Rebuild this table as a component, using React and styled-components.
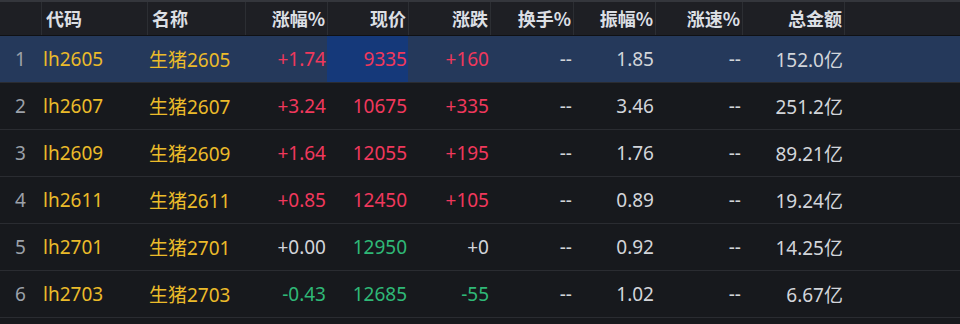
import React from 'react'
import styled, { createGlobalStyle } from 'styled-components'

const GlobalStyle = createGlobalStyle`
  html, body {
    margin: 0;
    padding: 0;
    background: #17191d;
  }
  body {
    font-family: "Noto Sans", "Noto Sans CJK SC", sans-serif;
  }
`

const COLS = '41px 106px 98px 82px 81px 82px 83px 82px 87px 102px 1fr'

const Table = styled.div`
  width: 960px;
  height: 324px;
  overflow: hidden;
  background: #17191d;
`

const HeaderRow = styled.div`
  display: grid;
  grid-template-columns: ${COLS};
  height: 36px;
  border-top: 2px solid #34363c;
  border-bottom: 1px solid #101114;
  background: #1e1f24;
  box-sizing: border-box;
`

const HeadCell = styled.div`
  display: flex;
  align-items: center;
  justify-content: ${p => (p.$left ? 'flex-start' : 'flex-end')};
  padding: ${p => (p.$left ? '0 0 2px 4px' : '0 2px 2px 0')};
  border-left: ${p => (p.$first ? 'none' : '1px solid #2c2e33')};
  font-family: "Noto Sans CJK SC", sans-serif;
  font-weight: 700;
  font-size: 18px;
  color: #dcdfe4;
  box-sizing: border-box;
`

const Row = styled.div`
  display: grid;
  grid-template-columns: ${COLS};
  height: 47px;
  box-sizing: border-box;
  border-bottom: 1px solid #2a2c31;
  background: ${p => (p.$active ? '#25395b' : '#17191d')};
`

const Cell = styled.div`
  display: flex;
  align-items: center;
  justify-content: ${p => (p.$align === 'left' ? 'flex-start' : p.$align === 'center' ? 'center' : 'flex-end')};
  padding: ${p => (p.$align === 'left' ? '0 0 0 2px' : p.$align === 'center' ? '0' : '0 1px 0 0')};
  font-size: 19px;
  color: ${p => p.$color || '#d2d5da'};
  background: ${p => (p.$mark ? '#15397a' : 'transparent')};
  white-space: nowrap;
  box-sizing: border-box;
`

const RED = '#f0385c'
const GREEN = '#2fb877'
const WHITE = '#d2d5da'
const YELLOW = '#ebbb2a'
const GREY = '#9ca1a9'

const rows = [
  { code: 'lh2605', name: '生猪2605', pct: '+1.74', price: '9335', chg: '+160', amp: '1.85', amt: '152.0亿', dir: 1 },
  { code: 'lh2607', name: '生猪2607', pct: '+3.24', price: '10675', chg: '+335', amp: '3.46', amt: '251.2亿', dir: 1 },
  { code: 'lh2609', name: '生猪2609', pct: '+1.64', price: '12055', chg: '+195', amp: '1.76', amt: '89.21亿', dir: 1 },
  { code: 'lh2611', name: '生猪2611', pct: '+0.85', price: '12450', chg: '+105', amp: '0.89', amt: '19.24亿', dir: 1 },
  { code: 'lh2701', name: '生猪2701', pct: '+0.00', price: '12950', chg: '+0', amp: '0.92', amt: '14.25亿', dir: 0 },
  { code: 'lh2703', name: '生猪2703', pct: '-0.43', price: '12685', chg: '-55', amp: '1.02', amt: '6.67亿', dir: -1 },
]

const headers = ['代码', '名称', '涨幅%', '现价', '涨跌', '换手%', '振幅%', '涨速%', '总金额']

const dirColor = d => (d > 0 ? RED : d < 0 ? GREEN : WHITE)

export default function App () {
  return (
    <Table>
      <GlobalStyle />
      <HeaderRow>
        <HeadCell $first />
        {headers.map((h, i) => (
          <HeadCell key={h} $left={i < 2}>{h}</HeadCell>
        ))}
        <HeadCell />
      </HeaderRow>
      {rows.map((r, i) => (
        <Row key={r.code} $active={i === 0}>
          <Cell $align="center" $color={GREY}>{i + 1}</Cell>
          <Cell $align="left" $color={YELLOW}>{r.code}</Cell>
          <Cell $align="left" $color={YELLOW}>{r.name}</Cell>
          <Cell $color={dirColor(r.dir)}>{r.pct}</Cell>
          <Cell $color={r.dir === 0 ? GREEN : dirColor(r.dir)} $mark={i === 0}>{r.price}</Cell>
          <Cell $color={dirColor(r.dir)}>{r.chg}</Cell>
          <Cell $color={WHITE}>--</Cell>
          <Cell $color={WHITE}>{r.amp}</Cell>
          <Cell $color={WHITE}>--</Cell>
          <Cell $color={WHITE}>{r.amt}</Cell>
          <Cell />
        </Row>
      ))}
    </Table>
  )
}
